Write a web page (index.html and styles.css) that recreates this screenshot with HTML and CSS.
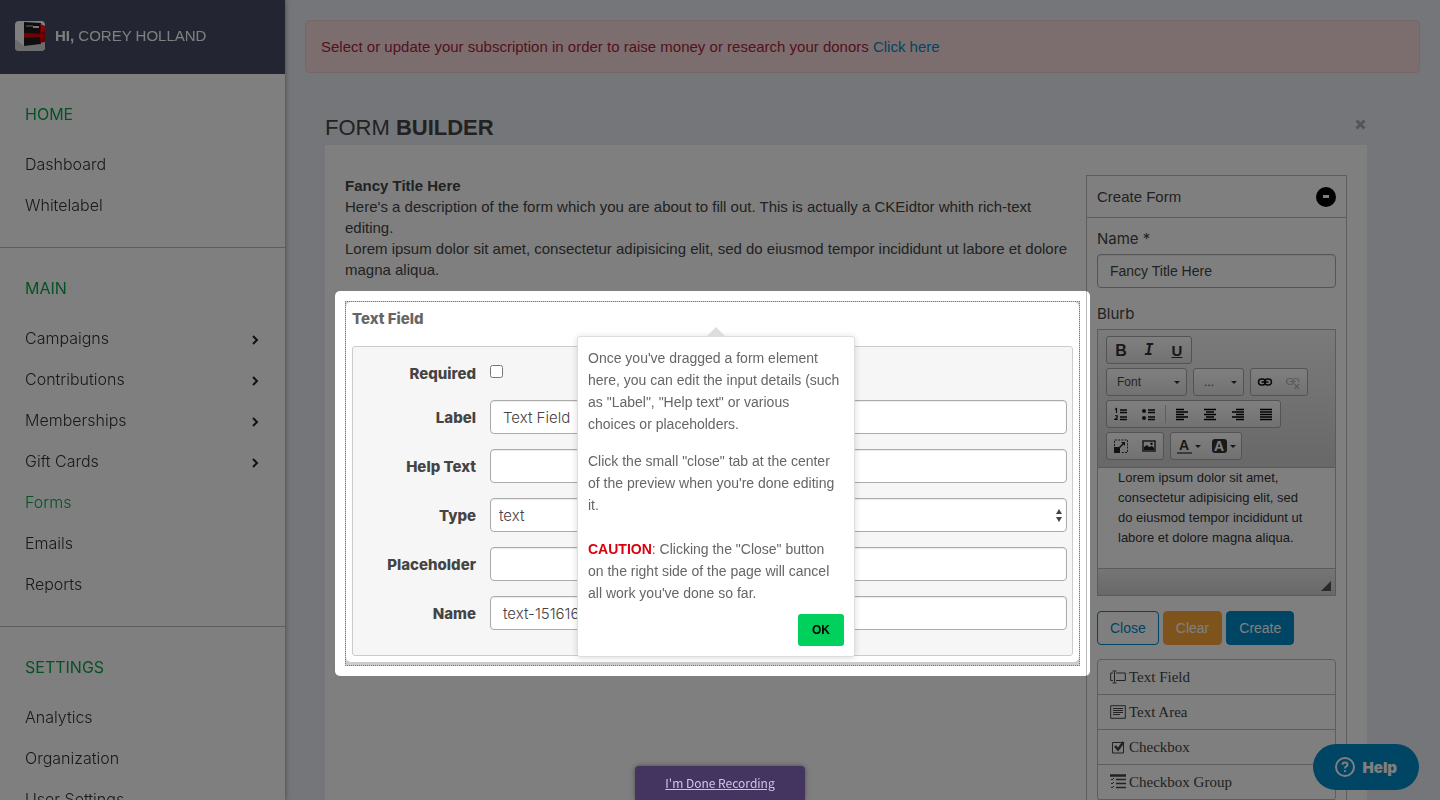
FILE: index.html
```
<!DOCTYPE html>
<html lang="en">
<head>
  <meta charset="UTF-8" />
  <meta name="viewport" content="width=device-width, initial-scale=1.0"/>
  <title>Form Builder</title>
  <link rel="stylesheet" href="styles.css">
</head>
<body class="tour-open">

  <!-- Sidebar -->
  <aside class="sidebar">
    <div class="user">
      <svg class="avatar" viewBox="0 0 30 30">
        <rect width="30" height="30" fill="#fff"/>
        <path d="M0 30V18L9 25L26 23L30 20V30Z" fill="#d8d8d8"/>
        <path d="M9 1L26 2V23L9 25Z" fill="#1c1c1c"/>
        <path d="M25 3L30 5V21L25 22Z" fill="#c80008"/>
        <path d="M9 12L28 13V16L9 17Z" fill="#e8000c"/>
        <path d="M26 4L30 6V10L26 11Z" fill="#ff1020"/>
        <path d="M11 4H18V6H11Z" fill="#777"/>
        <path d="M18 5H24V7H18Z" fill="#eee"/>
      </svg>
      <span><strong>HI,</strong> COREY HOLLAND</span>
    </div>

    <nav>
      <div class="nav-section">
        <h2>HOME</h2>
        <a href="#">Dashboard</a>
        <a href="#">Whitelabel</a>
      </div>
      <div class="nav-section">
        <h2>MAIN</h2>
        <a href="#">Campaigns <svg class="chevron" viewBox="0 0 8 10"><path d="M2 1L6 5L2 9"/></svg></a>
        <a href="#">Contributions <svg class="chevron" viewBox="0 0 8 10"><path d="M2 1L6 5L2 9"/></svg></a>
        <a href="#">Memberships <svg class="chevron" viewBox="0 0 8 10"><path d="M2 1L6 5L2 9"/></svg></a>
        <a href="#">Gift Cards <svg class="chevron" viewBox="0 0 8 10"><path d="M2 1L6 5L2 9"/></svg></a>
        <a href="#" class="current">Forms</a>
        <a href="#">Emails</a>
        <a href="#">Reports</a>
      </div>
      <div class="nav-section">
        <h2>SETTINGS</h2>
        <a href="#">Analytics</a>
        <a href="#">Organization</a>
        <a href="#">User Settings</a>
      </div>
    </nav>
  </aside>

  <!-- Main -->
  <main>
    <div class="alert">
      Select or update your subscription in order to raise money or research your donors <a href="#">Click here</a>
    </div>

    <div class="builder">
      <div class="builder-title">
        <h1>FORM <strong>BUILDER</strong></h1>
        <button class="close-x" aria-label="Close">
          <svg viewBox="0 0 11 11"><path d="M1.500 1.500L9.500 9.500M9.500 1.500L1.500 9.500"/></svg>
        </button>
      </div>

      <div class="builder-body">
        <!-- Preview -->
        <section class="preview">
          <div class="intro">
            <strong>Fancy Title Here</strong>
            <p>Here's a description of the form which you are about to fill out. This is actually a CKEidtor whith rich-text editing.</p>
            <p>Lorem ipsum dolor sit amet, consectetur adipisicing elit, sed do eiusmod tempor incididunt ut labore et dolore magna aliqua.</p>
          </div>

          <div class="field">
            <div class="field-inner">
              <h3>Text Field</h3>
              <form class="field-edit">
                <label for="f-required">Required</label>
                <input type="checkbox" id="f-required">
                <label for="f-label">Label</label>
                <input type="text" id="f-label" value="Text Field">
                <label for="f-help">Help Text</label>
                <input type="text" id="f-help">
                <label for="f-type">Type</label>
                <div class="select-wrap">
                  <select id="f-type"><option>text</option></select>
                  <svg viewBox="0 0 6 13"><path d="M0 5L3 0L6 5ZM0 8H6L3 13Z"/></svg>
                </div>
                <label for="f-placeholder">Placeholder</label>
                <input type="text" id="f-placeholder">
                <label for="f-name">Name</label>
                <input type="text" id="f-name" value="text-1516166">
              </form>
            </div>

            <div class="tour-highlight"></div>
            <div class="tour-tip">
              <p>Once you've dragged a form element here, you can edit the input details (such as "Label", "Help text" or various choices or placeholders.</p>
              <p>Click the small "close" tab at the center of the preview when you're done editing it.<br><br><strong>CAUTION</strong>: Clicking the "Close" button on the right side of the page will cancel all work you've done so far.</p>
              <button class="ok">OK</button>
            </div>
          </div>
        </section>

        <!-- Create form panel -->
        <section class="create">
          <div class="create-head">
            <span>Create Form</span>
            <button class="collapse" aria-label="Collapse"></button>
          </div>
          <div class="create-body">
            <label for="c-name">Name *</label>
            <input type="text" id="c-name" value="Fancy Title Here">
            <label for="c-blurb">Blurb</label>

            <div class="editor">
              <div class="toolbar">
                <div class="tool-row">
                  <div class="group">
                    <button class="t-bold">B</button>
                    <button class="t-italic">I</button>
                    <button class="t-underline">U</button>
                  </div>
                </div>
                <div class="tool-row">
                  <button class="group combo combo-font">Font <i class="caret"></i></button>
                  <button class="group combo combo-size">... <i class="caret"></i></button>
                  <div class="group">
                    <button aria-label="Link"><svg viewBox="0 0 16 16"><g fill="none" stroke="#111" stroke-width="1.500"><rect x="1.500" y="5" width="7" height="6" rx="3"/><rect x="7.500" y="5" width="7" height="6" rx="3"/><path d="M4.500 8H11.500"/></g></svg></button>
                    <button class="off" aria-label="Unlink"><svg viewBox="0 0 16 16"><g fill="none" stroke="#333" stroke-width="1.200"><rect x="1.500" y="4.500" width="7" height="6" rx="3"/><path d="M4.500 7.500H11M8 5.500Q9 4.500 11 4.500Q14 4.500 14 8M9.500 10L14 15M14 10L9.500 15"/></g></svg></button>
                  </div>
                </div>
                <div class="tool-row">
                  <div class="group">
                    <button aria-label="Numbered list"><svg viewBox="0 0 16 16"><path d="M7 4H14M7 6.500H14M7 11H14M7 13.500H14" stroke="#111" stroke-width="1.300"/><path d="M2 3.500L3.500 2.500V7M2 9.800H4.200V11.500L2 13.500H4.800" fill="none" stroke="#111" stroke-width="1.100"/></svg></button>
                    <button aria-label="Bulleted list"><svg viewBox="0 0 16 16"><circle cx="3" cy="5" r="2"/><circle cx="3" cy="12" r="2"/><path d="M7 4H14M7 6.500H14M7 11H14M7 13.500H14" stroke="#111" stroke-width="1.300"/></svg></button>
                    <i class="sep"></i>
                    <button aria-label="Align left"><svg viewBox="0 0 16 16"><path d="M2 3.500H10M2 6H14M2 8.500H10M2 11H14M2 13.500H10" stroke="#000" stroke-width="1.600"/></svg></button>
                    <button aria-label="Center"><svg viewBox="0 0 16 16"><path d="M2 3.500H14M4 6H12M2 8.500H14M4 11H12M2 13.500H14" stroke="#000" stroke-width="1.600"/></svg></button>
                    <button aria-label="Align right"><svg viewBox="0 0 16 16"><path d="M6 3.500H14M2 6H14M6 8.500H14M2 11H14M6 13.500H14" stroke="#000" stroke-width="1.600"/></svg></button>
                    <button aria-label="Justify"><svg viewBox="0 0 16 16"><path d="M2 3.500H14M2 6H14M2 8.500H14M2 11H14M2 13.500H14" stroke="#000" stroke-width="1.600"/></svg></button>
                  </div>
                </div>
                <div class="tool-row">
                  <div class="group">
                    <button aria-label="Maximize"><svg viewBox="0 0 16 16"><path d="M1.500 8V2H14.500V14.500H8" fill="none" stroke="#333" stroke-dasharray="2 1.200"/><rect x="1" y="9" width="6" height="6"/><path d="M6 10L11 5" stroke="#333" stroke-width="1.600"/><path d="M8 4H12V8Z"/></svg></button>
                    <button aria-label="Image"><svg viewBox="0 0 16 16"><rect x="2" y="3" width="12" height="10" fill="none" stroke="#333" stroke-width="1.500"/><path d="M3 12V9L6 7L8 9L11 8L13 10V12Z"/><circle cx="10.500" cy="5.800" r="1.200"/></svg></button>
                  </div>
                  <div class="group">
                    <button class="color" aria-label="Text color"><span>A</span><i class="caret"></i></button>
                    <button class="color bg" aria-label="Background color"><span>A</span><i class="caret"></i></button>
                  </div>
                </div>
              </div>
              <textarea id="c-blurb">Lorem ipsum dolor sit amet, consectetur adipisicing elit, sed do eiusmod tempor incididunt ut labore et dolore magna aliqua.</textarea>
              <div class="editor-foot"></div>
            </div>

            <div class="actions">
              <button class="btn btn-close">Close</button>
              <button class="btn btn-clear">Clear</button>
              <button class="btn btn-create">Create</button>
            </div>

            <ul class="elements">
              <li><svg viewBox="0 0 16 14"><path d="M3 3H.7V10.500H3M6 3H15.300V10.500H6M4.500 1.500V12.500M2.500 1H6.500M2.500 13H6.500"/></svg>Text Field</li>
              <li><svg viewBox="0 0 16 14"><path d="M.7.700H15.300V13.300H.7ZM3 3.500H13M3 5.500H13M3 7.500H13M3 9.500H10"/></svg>Text Area</li>
              <li><svg viewBox="0 0 16 14"><path d="M2.500 2.500H13.500V13H2.500Z"/><path d="M5 6L8 9.500L13.500 2" stroke-width="2.500"/></svg>Checkbox</li>
              <li><svg viewBox="0 0 16 16"><path d="M0 1.500H16" stroke-width="2.500"/><path d="M6 5.500H16M6 9.500H16M6 13.500H16" stroke-width="1.500"/><path d="M1 5L2 6L4 4M1 9L2 10L4 8M1 13L2 14L4 12"/></svg>Checkbox Group</li>
            </ul>
          </div>
        </section>
      </div>
    </div>
  </main>

  <button class="help">
    <svg viewBox="0 0 20 20"><circle cx="10" cy="10" r="9"/><path d="M7.500 7.800Q7.500 5.500 10 5.500Q12.500 5.500 12.500 7.700Q12.500 9 11 9.700Q10 10.200 10 11.500M10 13.300V15"/></svg>
    Help
  </button>

  <div class="recording"><a href="#">I'm Done Recording</a></div>

</body>
</html>
```
FILE: styles.css
```
* {
  box-sizing: border-box;
}

body {
  margin: 0;
  font-family: "Liberation Sans", Arial, sans-serif;
  font-size: 15px;
  line-height: 21px;
  color: #444;
  background-color: #ebecf2;
}

/* page behind the tour does not scroll */
.tour-open {
  height: 100vh;
  overflow: hidden;
}

h1, h2, h3, p, ul {
  margin: 0;
  padding: 0;
  font-weight: normal;
}

button, input, select, textarea {
  font: inherit;
  color: inherit;
}

button {
  cursor: pointer;
}

a {
  text-decoration: none;
  color: #008ac9;
}

/* Sidebar */
.sidebar {
  position: fixed;
  top: 0;
  bottom: 0;
  left: 0;
  width: 285px;
  overflow: hidden;
  background: #fff;
  box-shadow: 1px 0 4px rgba(0,0,0,0.3);
}

.user {
  display: flex;
  align-items: center;
  gap: 10px;
  height: 74px;
  padding: 0 15px 3px;
  background: #464c64;
  color: #fff;
}

.avatar {
  width: 30px;
  height: 30px;
  border-radius: 4px;
}

.nav-section {
  padding: 20px 25px 21px;
  border-bottom: 1px solid #bbb;
  font-family: Inter, sans-serif;
  font-size: 16px;
  font-weight: 300;
}

.nav-section h2 {
  margin-bottom: 9px;
  font-size: 16px;
  line-height: 41px;
  color: #0fa34e;
  font-weight: 400;
}

.nav-section a {
  display: flex;
  align-items: center;
  justify-content: space-between;
  height: 41px;
  color: #333;
}

.nav-section a.current {
  color: #0fa34e;
}

.chevron {
  width: 8px;
  height: 10px;
  margin-top: 3px;
  margin-right: 1px;
  fill: none;
  stroke: #222;
  stroke-width: 2;
}

/* Main */
main {
  margin-left: 285px;
  padding: 20px;
}

.alert {
  padding: 15px;
  border: 1px solid #ebccd1;
  border-radius: 4px;
  background: #f8dcdc;
  color: #a8243c;
}

.builder {
  margin: 38px 53px 0 20px;
}

.builder-title {
  display: flex;
  justify-content: space-between;
  height: 34px;
}

.builder-title h1 {
  font-size: 22px;
  line-height: 34px;
}

.close-x {
  height: 27px;
  padding: 0;
  border: none;
  background: none;
}

.close-x svg {
  display: block;
  width: 13px;
  height: 11px;
  stroke: #aaa;
  stroke-width: 3;
}

.builder-body {
  display: flex;
  align-items: flex-start;
  padding: 30px 20px;
  background: #fff;
}

.preview {
  flex: 1;
  padding-right: 6px;
}

.intro {
  margin-bottom: 21px;
}

/* Edited field */
.field {
  position: relative;
  border: 1px dotted #777;
  background: #ccc;
}

.field-inner {
  margin-bottom: 3px;
  padding: 6px;
  border-radius: 5px;
  background: #fff;
  font-family: Inter, sans-serif;
}

.field h3 {
  margin-bottom: 17px;
  font-size: 15px;
  font-weight: 800;
  color: #666;
}

.field-edit {
  display: grid;
  grid-template-columns: 123px 1fr;
  column-gap: 14px;
  row-gap: 15px;
  align-items: center;
  padding: 15px 5px 25px 0;
  border: 1px solid #ccc;
  border-radius: 3px;
  background: #f6f6f6;
}

.field-edit label {
  text-align: right;
  font-weight: 800;
}

.field-edit input[type="text"],
.field-edit select,
.create-body input {
  width: 100%;
  height: 34px;
  padding: 0 12px;
  border: 1px solid #aaa;
  border-radius: 4px;
  background: #fff;
  font-weight: 300;
  box-shadow: inset 0 1px 1px rgba(0,0,0,0.08);
}

.field-edit input[type="checkbox"] {
  width: 13px;
  height: 13px;
  margin: 3px 0 7px;
}

.select-wrap {
  position: relative;
}

.field-edit select {
  display: block;
  appearance: none;
  padding: 0 8px;
}

.select-wrap svg {
  position: absolute;
  top: 11px;
  right: 5px;
  width: 6px;
  height: 13px;
  fill: #444;
}

/* Tour */
.tour-highlight {
  position: absolute;
  inset: -11px;
  z-index: 10;
  border-radius: 5px;
  box-shadow: 0 0 0 3000px rgba(0,0,0,0.5);
  pointer-events: none;
}

.tour-tip {
  position: absolute;
  top: 34px;
  left: 231px;
  z-index: 11;
  width: 278px;
  padding: 10px;
  border: 1px solid #ddd;
  border-radius: 3px;
  background: #fff;
  box-shadow: 0 1px 6px rgba(0,0,0,0.15);
  font-size: 14px;
  line-height: 22px;
  color: #666;
}

.tour-tip::before {
  content: "";
  position: absolute;
  top: -10px;
  left: 50%;
  margin-left: -9px;
  border: 9px solid transparent;
  border-top: none;
  border-bottom-color: #ddd;
}

.tour-tip p {
  max-width: 252px;
  margin-bottom: 15px;
}

.tour-tip p + p {
  margin-bottom: 10px;
}

.tour-tip strong {
  color: #d9000d;
}

.ok {
  display: block;
  width: 46px;
  height: 32px;
  margin-left: auto;
  padding: 0;
  border: none;
  border-radius: 3px;
  background: #00d05c;
  color: #000;
  font-size: 12px;
  font-weight: bold;
}

/* Create form panel */
.create {
  width: 261px;
  border: 1px solid #bbb;
}

.create-head {
  display: flex;
  justify-content: space-between;
  align-items: center;
  height: 42px;
  padding: 0 10px;
  border-bottom: 1px solid #bbb;
}

.collapse {
  width: 20px;
  height: 20px;
  padding: 0 7px;
  border: none;
  border-radius: 50%;
  background: #000;
}

.collapse::before {
  content: "";
  display: block;
  height: 3px;
  background: #fff;
}

.create-body {
  padding: 10px;
}

.create-body > label {
  display: block;
  margin-bottom: 5px;
  font-family: Inter, sans-serif;
}

.create-body > input {
  display: block;
  margin-bottom: 15px;
  font-size: 14px;
}

.editor {
  margin-bottom: 15px;
  border: 1px solid #b6b6b6;
}

.toolbar {
  display: flex;
  flex-direction: column;
  gap: 4px;
  padding: 6px 8px 7px;
  border-bottom: 1px solid #b6b6b6;
  background: linear-gradient(#f5f5f5, #cfd1cf);
}

.tool-row {
  display: flex;
  gap: 6px;
}

.group {
  display: flex;
  align-items: center;
  height: 28px;
  border: 1px solid #a6a6a6;
  border-radius: 3px;
  background: linear-gradient(#fff, #e4e4e4);
}

.group button {
  display: flex;
  align-items: center;
  justify-content: center;
  width: 28px;
  height: 26px;
  padding: 0;
  border: none;
  background: none;
  color: #333;
}

.group svg {
  width: 16px;
  height: 16px;
  fill: #222;
}

.group .t-bold {
  font-size: 16px;
  font-weight: bold;
}

.group .t-italic {
  font: italic bold 15px "DejaVu Sans Mono", monospace;
}

.group .t-underline {
  font-size: 15px;
  font-weight: bold;
  text-decoration: underline;
}

.combo {
  justify-content: space-between;
  padding: 0 6px 0 10px;
  font-size: 12px;
  color: #474747;
}

.combo-font {
  width: 81px;
}

.combo-size {
  width: 51px;
}

.caret {
  border: 3px solid transparent;
  border-top-color: #333;
  border-bottom: none;
}

.sep {
  width: 1px;
  height: 18px;
  margin: 0 2px;
  background: #bbb;
}

.group .off {
  opacity: 0.3;
}

.group .color {
  gap: 3px;
  width: 35px;
}

.color span {
  width: 15px;
  border-bottom: 2px solid #777;
  font-size: 14px;
  font-weight: bold;
  line-height: 14px;
}

.color.bg span {
  border: none;
  border-radius: 3px;
  background: #333;
  color: #fff;
}

.editor textarea {
  display: block;
  width: 100%;
  height: 100px;
  padding: 0 20px;
  border: none;
  resize: none;
  background: #fff;
  color: #333;
  font-size: 13px;
  line-height: 20px;
}

.editor-foot {
  display: flex;
  align-items: flex-end;
  justify-content: flex-end;
  height: 27px;
  padding: 4px;
  border-top: 1px solid #b6b6b6;
  background: linear-gradient(#ebebeb, #cfd1cf);
}

.editor-foot::after {
  content: "";
  border: 5px solid #555;
  border-top-color: transparent;
  border-left-color: transparent;
}

.actions {
  display: flex;
  gap: 4px;
  margin-bottom: 14px;
}

.btn {
  height: 34px;
  padding: 0 12px;
  border: 1px solid #008ac9;
  border-radius: 4px;
  background: #008ac9;
  color: #fff;
  font-size: 14px;
}

.btn-close {
  background: #fff;
  color: #008ac9;
}

.btn-clear {
  border-color: #ffa938;
  background: #ffa938;
}

.elements {
  list-style: none;
  border: 1px solid #bbb;
  border-radius: 4px;
}

.elements li {
  display: flex;
  align-items: center;
  gap: 3px;
  height: 35px;
  padding: 0 12px;
  border-bottom: 1px solid #bbb;
  font-family: "Liberation Serif", "Times New Roman", serif;
}

.elements svg {
  width: 16px;
  height: 16px;
  fill: none;
  stroke: #444;
}

/* Floating buttons */
.help {
  position: fixed;
  right: 21px;
  bottom: 10px;
  display: flex;
  align-items: center;
  gap: 8px;
  height: 46px;
  padding: 0 22px;
  border: none;
  border-radius: 23px;
  background: #008ac9;
  color: #fff;
  font-family: Inter, sans-serif;
  font-weight: 900;
}

.help svg {
  width: 20px;
  height: 20px;
  fill: none;
  stroke: #fff;
  stroke-width: 2;
}

.recording {
  position: fixed;
  bottom: 0;
  left: 50%;
  z-index: 12;
  width: 170px;
  height: 34px;
  margin-left: -85px;
  border-radius: 4px 4px 0 0;
  background: #43355f;
  box-shadow: 0 0 5px rgba(0,0,0,0.4);
  font-family: "Noto Sans CJK SC", sans-serif;
  font-size: 12px;
  line-height: 34px;
  text-align: center;
}

.recording a {
  color: #cfc6e6;
  text-decoration: underline;
}
```
